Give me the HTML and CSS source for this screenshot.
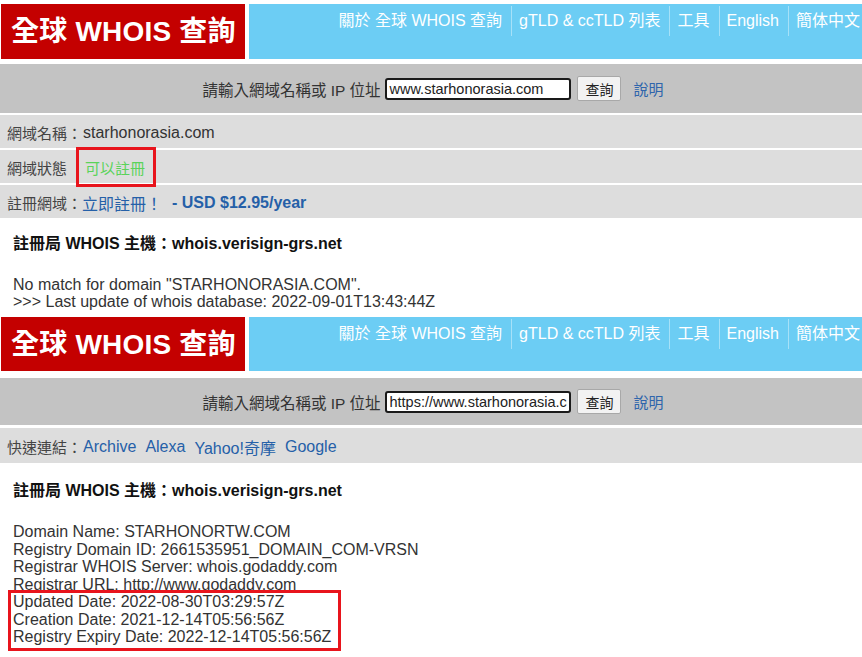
FILE: index.html
```html
<!DOCTYPE html>
<html lang="zh-Hant">
<head>
<meta charset="utf-8">
<title>全球 WHOIS 查詢</title>
<link rel="stylesheet" href="styles.css">
</head>
<body>
<section class="shot shot1">
  <header class="top">
    <div class="logo">全球 WHOIS 查詢</div>
    <nav class="nav">
      <a class="nav-item first">關於 全球 WHOIS 查詢</a>
      <a class="nav-item">gTLD &amp; ccTLD 列表</a>
      <a class="nav-item">工具</a>
      <a class="nav-item">English</a>
      <a class="nav-item">簡体中文</a>
    </nav>
  </header>
  <div class="query">
    <span class="q-label">請輸入網域名稱或 IP 位址</span>
    <input class="q-input" type="text" value="www.starhonorasia.com">
    <button class="q-btn" type="button">查詢</button>
    <a class="q-help">說明</a>
  </div>
  <div class="rows">
    <div class="row"><span class="lbl">網域名稱：</span><span class="val">starhonorasia.com</span></div>
    <div class="row"><span class="lbl">網域狀態</span><span class="status">可以註冊</span></div>
    <div class="row"><span class="lbl">註冊網域：</span><a class="link">立即註冊！</a><b class="link price">- USD $12.95/year</b></div>
  </div>
  <div class="result">
    <h3 class="res-title">註冊局 WHOIS 主機：whois.verisign-grs.net</h3>
    <div class="res-lines">
      <div>No match for domain "STARHONORASIA.COM".</div>
      <div>&gt;&gt;&gt; Last update of whois database: 2022-09-01T13:43:44Z</div>
    </div>
  </div>
</section>

<section class="shot shot2">
  <header class="top">
    <div class="logo">全球 WHOIS 查詢</div>
    <nav class="nav">
      <a class="nav-item first">關於 全球 WHOIS 查詢</a>
      <a class="nav-item">gTLD &amp; ccTLD 列表</a>
      <a class="nav-item">工具</a>
      <a class="nav-item">English</a>
      <a class="nav-item">簡体中文</a>
    </nav>
  </header>
  <div class="query">
    <span class="q-label">請輸入網域名稱或 IP 位址</span>
    <input class="q-input" type="text" value="https://www.starhonorasia.com">
    <button class="q-btn" type="button">查詢</button>
    <a class="q-help">說明</a>
  </div>
  <div class="rows">
    <div class="row quick"><span class="lbl">快速連結：</span><a class="link ql">Archive</a><a class="link ql">Alexa</a><a class="link ql">Yahoo!奇摩</a><a class="link ql">Google</a></div>
  </div>
  <div class="result">
    <h3 class="res-title">註冊局 WHOIS 主機：whois.verisign-grs.net</h3>
    <div class="res-lines data">
      <div>Domain Name: STARHONORTW.COM</div>
      <div>Registry Domain ID: 2661535951_DOMAIN_COM-VRSN</div>
      <div>Registrar WHOIS Server: whois.godaddy.com</div>
      <div>Registrar URL: http://www.godaddy.com</div>
      <div class="hl">
        <div>Updated Date: 2022-08-30T03:29:57Z</div>
        <div>Creation Date: 2021-12-14T05:56:56Z</div>
        <div>Registry Expiry Date: 2022-12-14T05:56:56Z</div>
      </div>
    </div>
  </div>
</section>
</body>
</html>
```

FILE: styles.css
```css
* { box-sizing: border-box; }

html, body {
  margin: 0;
  padding: 0;
  background: #ffffff;
}

body {
  width: 862px;
  height: 657px;
  overflow: hidden;
  font-family: "Liberation Sans", "Noto Sans CJK TC", Arial, sans-serif;
  font-size: 16px;
  color: #333;
}

.shot { display: flex; flex-direction: column; }

.top {
  display: flex;
  gap: 4px;
  height: 55px;
  margin-top: 4px;
  padding-left: 1px;
}

.logo {
  width: 244px;
  background: #c40000;
  color: #fff;
  font-weight: bold;
  font-size: 28px;
  line-height: 55px;
  padding-left: 10px;
  white-space: nowrap;
  letter-spacing: 0.2px;
}

.nav {
  flex: 1;
  background: #6ccdf4;
  display: flex;
  justify-content: flex-end;
  align-items: flex-start;
  overflow: hidden;
  white-space: nowrap;
}

.nav-item {
  color: #fff;
  font-size: 16px;
  line-height: 30px;
  height: 30px;
  margin-top: 2px;
  padding: 0 9px 0 7px;
  border-left: 1px solid rgba(255, 255, 255, 0.4);
}
.nav-item.first { border-left: none; }
.nav-item:last-child { padding-right: 2px; }

.query {
  margin-top: 5px;
  height: 49px;
  background: #c3c3c3;
  display: flex;
  justify-content: center;
  align-items: center;
  padding-left: 4px;
}

.q-label {
  color: #333;
  font-size: 15.5px;
  margin-right: 5px;
}

.q-input {
  width: 186px;
  height: 22px;
  border: 2px solid #1a1a1a;
  border-radius: 3px;
  padding: 0 2px;
  font-family: "Liberation Sans", Arial, sans-serif;
  font-size: 14.5px;
  color: #222;
  background: #fff;
}

.q-btn {
  margin-left: 6px;
  width: 44px;
  height: 25px;
  border: 1px solid #a8a8a8;
  border-radius: 2px;
  background: #f2f2f2;
  font-family: "Noto Sans CJK TC", sans-serif;
  font-size: 14px;
  color: #222;
  padding: 0;
}

.q-help {
  margin-left: 12px;
  color: #2f65ac;
  font-size: 15px;
}

.rows {
  margin-top: 2px;
  display: flex;
  flex-direction: column;
  gap: 2px;
}

.row {
  height: 33px;
  background: #dddddd;
  display: flex;
  align-items: center;
  padding-left: 7px;
  padding-top: 2px;
  white-space: nowrap;
}

.lbl { color: #444; font-size: 15px; }
.val { color: #333; margin-left: 1px; }

.status {
  position: relative;
  color: #5ad35a;
  font-size: 15px;
  margin-left: 18px;
}
.status::after {
  content: "";
  position: absolute;
  left: -9px;
  right: -11px;
  top: -10px;
  bottom: -9px;
  border: 3px solid #e8141c;
}

.link { color: #2560a8; }
.price { margin-left: 10px; font-weight: bold; }
.ql { margin-left: 9px; }
.ql:first-of-type { margin-left: 1px; }

.result { padding-left: 13px; }

.res-title {
  margin: 17px 0 0;
  font-size: 16px;
  line-height: 18px;
  font-weight: bold;
  color: #111;
}

.res-lines {
  margin-top: 24px;
  line-height: 16.5px;
  color: #333;
  white-space: nowrap;
}

.shot2 { margin-top: 3px; }
.shot2 .top { height: 54px; }
.shot2 .query { margin-top: 7px; height: 47px; }
.shot2 .rows { margin-top: 3px; }
.shot2 .row { height: 35px; }
.shot2 .res-title { margin-top: 19px; }
.shot2 .res-lines { margin-top: 23px; line-height: 17.5px; }

.hl { position: relative; }
.hl::after {
  content: "";
  position: absolute;
  left: -5px;
  top: -3px;
  width: 327px;
  bottom: -5px;
  border: 3px solid #e8141c;
}
```
